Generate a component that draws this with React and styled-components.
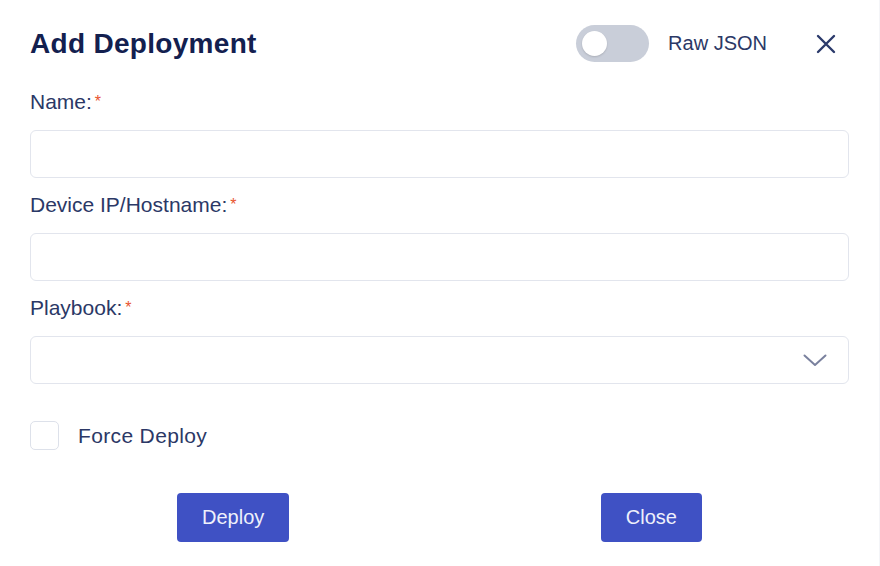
import React, { useState } from 'react';
import styled, { createGlobalStyle } from 'styled-components';

const GlobalStyle = createGlobalStyle`
  html, body {
    margin: 0;
    padding: 0;
    background: #f4f5f8;
  }
  body {
    font-family: "Liberation Sans", Arial, sans-serif;
  }
`;

// modal panel
const Modal = styled.div`
  width: 879px;
  height: 566px;
  box-sizing: border-box;
  background: #ffffff;
  padding: 25px 30px 0 30px;
  display: flex;
  flex-direction: column;
`;

// header
const Header = styled.div`
  display: flex;
  align-items: center;
  height: 37px;
  margin-bottom: 28px;
`;

const Title = styled.h2`
  margin: 0;
  flex: 1;
  font-size: 28px;
  font-weight: 700;
  letter-spacing: 0.3px;
  color: #13204f;
`;

const Toggle = styled.button`
  width: 73px;
  height: 37px;
  border: none;
  border-radius: 19px;
  background: ${(p) => (p.$on ? '#3f51c4' : '#c9ced9')};
  padding: 0 6px;
  display: flex;
  align-items: center;
  justify-content: ${(p) => (p.$on ? 'flex-end' : 'flex-start')};
  cursor: pointer;
`;

const Knob = styled.span`
  width: 25px;
  height: 25px;
  border-radius: 50%;
  background: #ffffff;
  box-shadow: 0 1px 2px rgba(0, 0, 0, 0.15);
`;

const ToggleLabel = styled.span`
  font-size: 20px;
  color: #2b3866;
  margin-left: 19px;
`;

const CloseIcon = styled.button`
  border: none;
  background: none;
  padding: 0;
  margin-left: 48px;
  margin-right: 12px;
  width: 22px;
  height: 22px;
  display: flex;
  align-items: center;
  justify-content: center;
  cursor: pointer;
`;

// form
const Field = styled.div`
  display: flex;
  flex-direction: column;
  margin-bottom: 15px;
`;

const Label = styled.label`
  font-size: 21px;
  line-height: 24px;
  color: #2b3866;
  margin-bottom: 16px;
`;

const Star = styled.span`
  color: #e8542f;
  font-size: 16px;
  vertical-align: top;
  margin-left: 3px;
`;

const Input = styled.input`
  height: 48px;
  box-sizing: border-box;
  border: 1px solid #e2e5ed;
  border-radius: 6px;
  padding: 0 14px;
  font-size: 18px;
  font-family: inherit;
  outline: none;
`;

const SelectBox = styled.div`
  height: 48px;
  box-sizing: border-box;
  border: 1px solid #e2e5ed;
  border-radius: 6px;
  padding: 0 21px 0 14px;
  display: flex;
  align-items: center;
  justify-content: flex-end;
  cursor: pointer;
`;

const CheckRow = styled.label`
  display: flex;
  align-items: center;
  margin-top: 22px;
  cursor: pointer;
`;

const Checkbox = styled.span`
  width: 29px;
  height: 29px;
  box-sizing: border-box;
  border: 1px solid #dde1ea;
  border-radius: 5px;
  background: ${(p) => (p.$checked ? '#3f51c4' : '#fff')};
`;

const CheckText = styled.span`
  margin-left: 19px;
  font-size: 21px;
  letter-spacing: 0.35px;
  color: #2b3866;
`;

// footer
const Actions = styled.div`
  display: flex;
  justify-content: space-between;
  padding: 0 147px;
  margin-top: 43px;
`;

const Button = styled.button`
  height: 49px;
  padding: 0 25px;
  border: none;
  border-radius: 4px;
  background: #3f51c4;
  color: #eef0fb;
  font-family: inherit;
  font-size: 20px;
  cursor: pointer;
`;

function App() {
  const [raw, setRaw] = useState(false);
  const [force, setForce] = useState(false);

  const fields = [
    { id: 'name', label: 'Name:' },
    { id: 'host', label: 'Device IP/Hostname:' }
  ];

  return (
    <>
      <GlobalStyle />
      <Modal>
        <Header>
          <Title>Add Deployment</Title>
          <Toggle $on={raw} onClick={() => setRaw(!raw)}>
            <Knob />
          </Toggle>
          <ToggleLabel>Raw JSON</ToggleLabel>
          <CloseIcon aria-label="close">
            <svg width="20" height="20" viewBox="0 0 20 20">
              <path d="M2 2 L18 18 M18 2 L2 18" stroke="#2b3a6b" strokeWidth="2.4" strokeLinecap="round" />
            </svg>
          </CloseIcon>
        </Header>

        {fields.map((f) => (
          <Field key={f.id}>
            <Label htmlFor={f.id}>
              {f.label}
              <Star>*</Star>
            </Label>
            <Input id={f.id} />
          </Field>
        ))}

        <Field>
          <Label>
            Playbook:
            <Star>*</Star>
          </Label>
          <SelectBox>
            <svg width="24" height="13" viewBox="0 0 24 13">
              <path d="M1.5 1.5 L12 11 L22.5 1.5" fill="none" stroke="#7a819e" strokeWidth="2" strokeLinecap="round" strokeLinejoin="round" />
            </svg>
          </SelectBox>
        </Field>

        <CheckRow onClick={() => setForce(!force)}>
          <Checkbox $checked={force} />
          <CheckText>Force Deploy</CheckText>
        </CheckRow>

        <Actions>
          <Button>Deploy</Button>
          <Button>Close</Button>
        </Actions>
      </Modal>
    </>
  );
}

export default App;
